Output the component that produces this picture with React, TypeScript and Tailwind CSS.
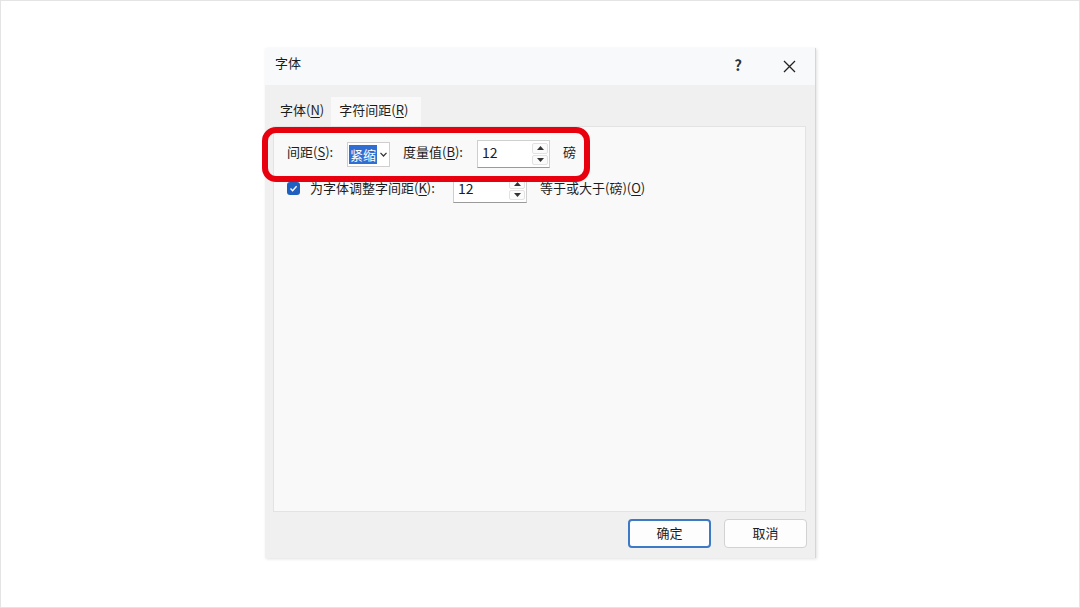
import React from "react";

// Word "字体" dialog, 字符间距 tab, with the red highlight around the spacing row.

const U = ({ children }: { children: React.ReactNode }) => (
  <span className="underline underline-offset-2">{children}</span>
);

function Spinner() {
  return (
    <div className="flex h-full w-[17px] flex-col gap-[1px] py-[2px] pr-[1px]">
      <div className="flex flex-1 items-center justify-center rounded-[2px] border border-[#e2e2e2] bg-[#fbfbfb]">
        <svg width="7" height="4" viewBox="0 0 7 4">
          <path d="M0 4 L3.5 0 L7 4 Z" fill="#333" />
        </svg>
      </div>
      <div className="flex flex-1 items-center justify-center rounded-[2px] border border-[#e2e2e2] bg-[#fbfbfb]">
        <svg width="7" height="4" viewBox="0 0 7 4">
          <path d="M0 0 L7 0 L3.5 4 Z" fill="#333" />
        </svg>
      </div>
    </div>
  );
}

function NumberBox({ value, w, h }: { value: string; w: string; h: string }) {
  return (
    <div
      className={`flex items-stretch border border-[#cfcfcf] border-b-[#9a9a9a] bg-white ${w} ${h}`}
    >
      <span className="flex flex-1 items-center pb-[3px] pl-[4px] text-[14px]">{value}</span>
      <Spinner />
    </div>
  );
}

export default function App() {
  return (
    <div className="h-[608px] w-[1080px] border border-[#e4e4e4] bg-white pl-[264px] pt-[47px] font-['Noto_Sans_CJK_SC',sans-serif] text-[13px] text-[#1c1c1c]">
      <div className="relative flex h-[510px] w-[551px] flex-col border-r border-[#d6d6d6] bg-[#f0f0f0] shadow-[1px_1px_3px_rgba(0,0,0,0.12)]">
        {/* title bar */}
        <div className="flex h-[37px] items-center bg-[#f8f9fa] pb-[7px] pl-[10px]">
          <span>字体</span>
          <span className="ml-auto mr-[10px] flex w-[40px] justify-center pt-[4px] text-[15px] font-semibold text-[#333]">
            ?
          </span>
          <span className="mr-[5px] flex w-[42px] justify-center pt-[6px]">
            <svg width="13" height="13" viewBox="0 0 13 13">
              <path d="M1 1 L12 12 M12 1 L1 12" stroke="#222" strokeWidth="1.3" />
            </svg>
          </span>
        </div>

        {/* tabs */}
        <div className="mt-[12px] flex h-[29px] items-stretch pl-[8px]">
          <div className="flex items-center px-[7px] pb-[3px]">
            字体(<U>N</U>)
          </div>
          <div className="flex w-[90px] items-center bg-[#f9f9f9] pb-[3px] pl-[8px]">
            字符间距(<U>R</U>)
          </div>
        </div>

        {/* tab panel */}
        <div className="mx-[8px] flex h-[386px] w-[533px] flex-col border border-[#e3e3e3] bg-[#f9f9f9] pl-[13px] pt-[13px]">
          <div className="flex h-[28px] items-center">
            <span className="w-[60px] pb-[4px]">
              间距(<U>S</U>):
            </span>
            <div className="flex h-[25px] w-[43px] items-center border border-[#cfcfcf] bg-white pl-[1px]">
              <span className="bg-[#2f6fd4] px-[1px] leading-[19px] text-white">紧缩</span>
              <svg className="ml-[3px]" width="7" height="5" viewBox="0 0 7 5">
                <path d="M0.5 0.8 L3.5 4 L6.5 0.8" stroke="#333" strokeWidth="1.2" fill="none" />
              </svg>
            </div>
            <span className="ml-[13px] w-[74px] pb-[4px]">
              度量值(<U>B</U>):
            </span>
            <NumberBox value="12" w="w-[73px]" h="h-[28px]" />
            <span className="ml-[13px] pb-[4px]">磅</span>
          </div>

          <div className="mt-[8px] flex h-[27px] items-center">
            <span className="mb-[2px] flex h-[13px] w-[13px] items-center justify-center rounded-[3px] bg-[#1f5fbf]">
              <svg width="9" height="9" viewBox="0 0 9 9">
                <path d="M1.5 4.6 L3.6 6.7 L7.6 2.2" stroke="#fff" strokeWidth="1.4" fill="none" />
              </svg>
            </span>
            <span className="ml-[10px] w-[143px] pb-[4px]">
              为字体调整字间距(<U>K</U>):
            </span>
            <NumberBox value="12" w="w-[74px]" h="h-[27px]" />
            <span className="ml-[13px] pb-[4px]">
              等于或大于(磅)(<U>O</U>)
            </span>
          </div>
        </div>

        {/* footer */}
        <div className="flex flex-1 items-start justify-end gap-[13px] pr-[8px] pt-[7px]">
          <button className="h-[29px] w-[83px] rounded-[4px] border-2 border-[#3d79c4] bg-[#fdfdfd] pb-[2px]">
            确定
          </button>
          <button className="h-[29px] w-[83px] rounded-[4px] border border-[#d2d2d2] bg-[#fdfdfd] pb-[2px]">
            取消
          </button>
        </div>

        {/* red highlight overlay */}
        <div className="pointer-events-none absolute left-[-3px] top-[79px] h-[55px] w-[328px] rounded-[14px] border-[6px] border-[#e8000e]" />
      </div>
    </div>
  );
}
